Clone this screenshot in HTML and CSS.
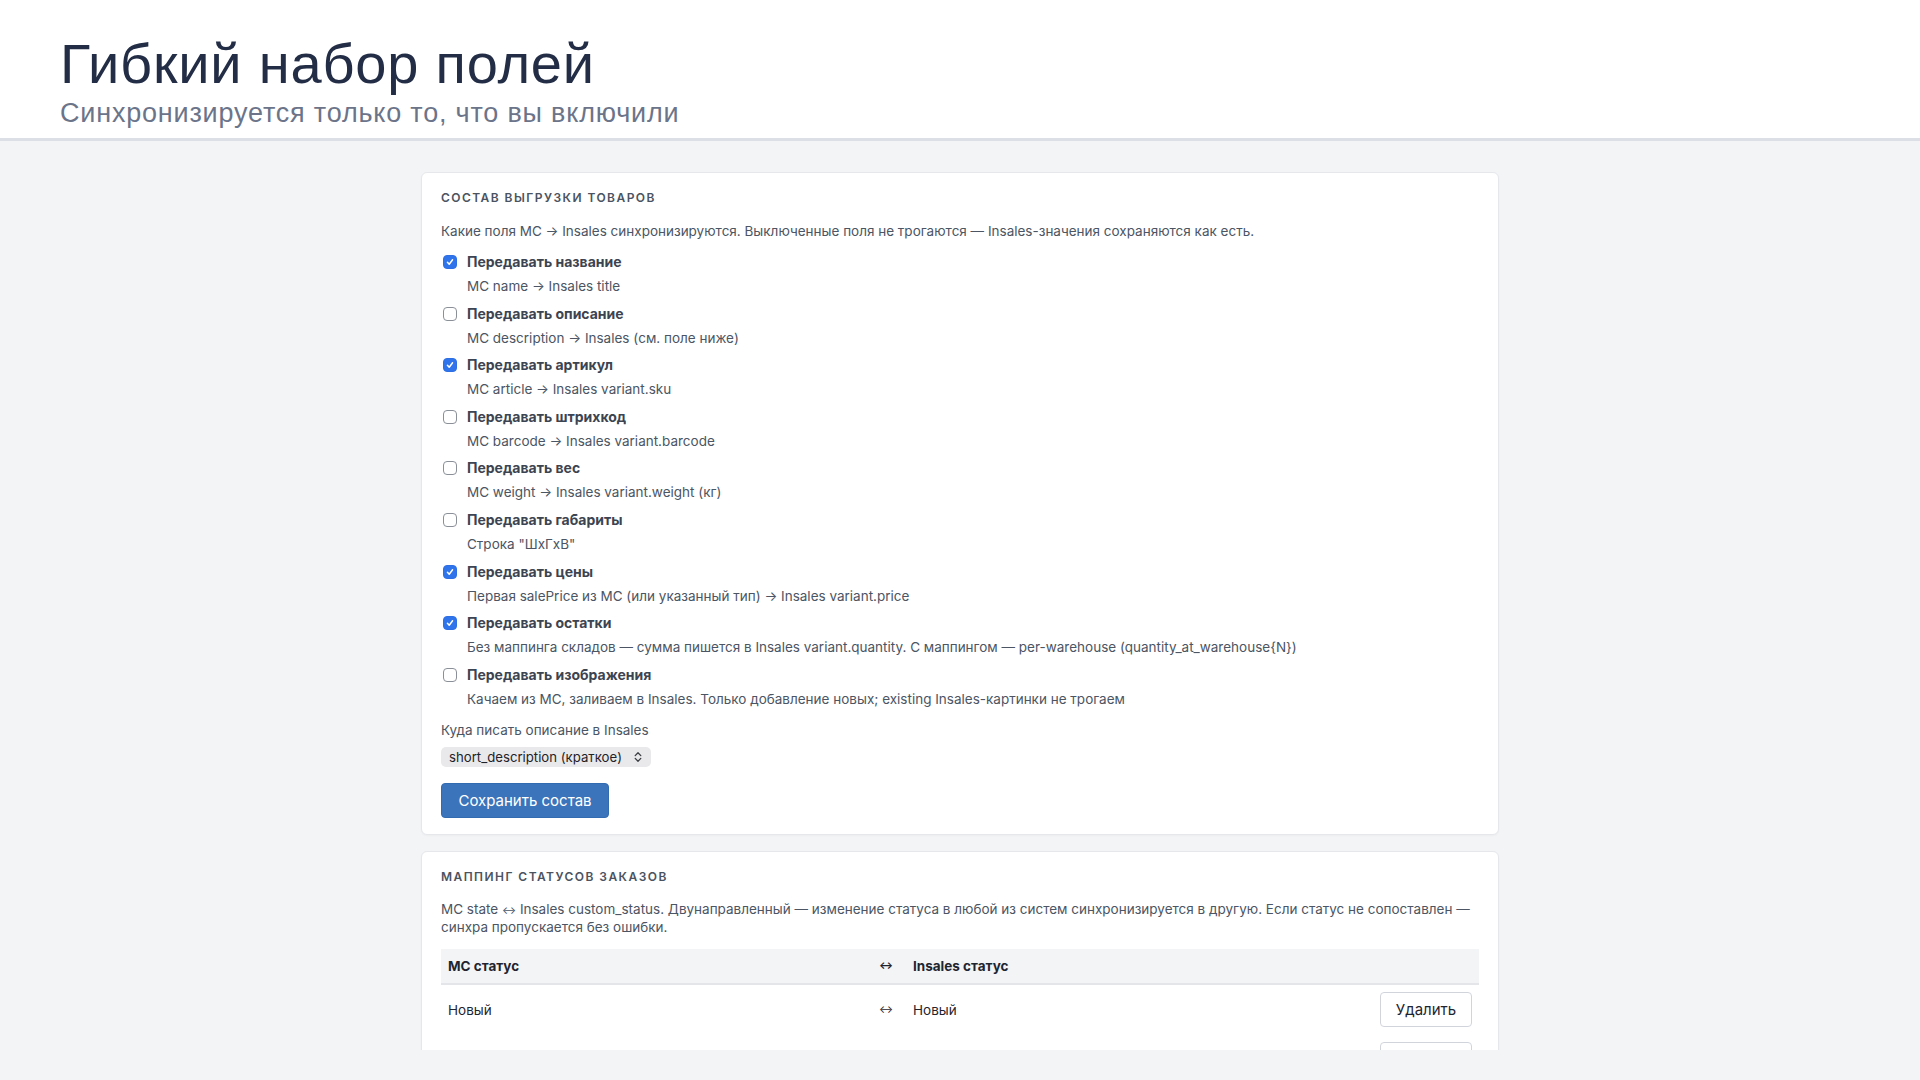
FILE: index.html
```html
<!DOCTYPE html>
<html lang="ru">
<head>
<meta charset="utf-8">
<title>Гибкий набор полей</title>
<link rel="stylesheet" href="styles.css">
</head>
<body>
<div class="page">
  <header class="hero">
    <h1 class="hero-title">Гибкий набор полей</h1>
    <p class="hero-sub">Синхронизируется только то, что вы включили</p>
  </header>
  <main class="main">
    <div class="container">
      <section class="card">
        <h2 class="card-title">Состав выгрузки товаров</h2>
        <p class="card-desc">Какие поля МС → Insales синхронизируются. Выключенные поля не трогаются — Insales-значения сохраняются как есть.</p>
        <ul class="fields">
          <li class="field">
            <div class="field-head"><span class="cb cb-on"><svg viewBox="0 0 14 14"><path d="M4 7.3 L6.1 9.6 L10 4.4" /></svg></span><span class="field-label">Передавать название</span></div>
            <div class="field-hint">MC name → Insales title</div>
          </li>
          <li class="field">
            <div class="field-head"><span class="cb"></span><span class="field-label">Передавать описание</span></div>
            <div class="field-hint">MC description → Insales (см. поле ниже)</div>
          </li>
          <li class="field">
            <div class="field-head"><span class="cb cb-on"><svg viewBox="0 0 14 14"><path d="M4 7.3 L6.1 9.6 L10 4.4" /></svg></span><span class="field-label">Передавать артикул</span></div>
            <div class="field-hint">MC article → Insales variant.sku</div>
          </li>
          <li class="field">
            <div class="field-head"><span class="cb"></span><span class="field-label">Передавать штрихкод</span></div>
            <div class="field-hint">MC barcode → Insales variant.barcode</div>
          </li>
          <li class="field">
            <div class="field-head"><span class="cb"></span><span class="field-label">Передавать вес</span></div>
            <div class="field-hint">MC weight → Insales variant.weight (кг)</div>
          </li>
          <li class="field">
            <div class="field-head"><span class="cb"></span><span class="field-label">Передавать габариты</span></div>
            <div class="field-hint">Строка "ШxГxВ"</div>
          </li>
          <li class="field">
            <div class="field-head"><span class="cb cb-on"><svg viewBox="0 0 14 14"><path d="M4 7.3 L6.1 9.6 L10 4.4" /></svg></span><span class="field-label">Передавать цены</span></div>
            <div class="field-hint">Первая salePrice из МС (или указанный тип) → Insales variant.price</div>
          </li>
          <li class="field">
            <div class="field-head"><span class="cb cb-on"><svg viewBox="0 0 14 14"><path d="M4 7.3 L6.1 9.6 L10 4.4" /></svg></span><span class="field-label">Передавать остатки</span></div>
            <div class="field-hint">Без маппинга складов — сумма пишется в Insales variant.quantity. С маппингом — per-warehouse (quantity_at_warehouse{N})</div>
          </li>
          <li class="field">
            <div class="field-head"><span class="cb"></span><span class="field-label">Передавать изображения</span></div>
            <div class="field-hint">Качаем из МС, заливаем в Insales. Только добавление новых; existing Insales-картинки не трогаем</div>
          </li>
        </ul>
        <div class="form-label">Куда писать описание в Insales</div>
        <div class="select">
          <span class="select-text">short_description (краткое)</span>
          <svg class="select-icon" viewBox="0 0 8 12"><path d="M1.2 4.6 L4 1.8 L6.8 4.6 M1.2 7.4 L4 10.2 L6.8 7.4" /></svg>
        </div>
        <button class="btn-primary" type="button">Сохранить состав</button>
      </section>

      <section class="card">
        <h2 class="card-title">Маппинг статусов заказов</h2>
        <p class="card-desc card-desc-wrap">МС state <span class="arrow">↔</span> Insales custom_status. Двунаправленный — изменение статуса в любой из систем синхронизируется в другую. Если статус не сопоставлен — синхра пропускается без ошибки.</p>
        <div class="map-table">
          <div class="map-row map-head">
            <div class="cell">МС статус</div>
            <div class="cell cell-arrow">↔</div>
            <div class="cell">Insales статус</div>
            <div class="cell"></div>
          </div>
          <div class="map-row">
            <div class="cell">Новый</div>
            <div class="cell cell-arrow">↔</div>
            <div class="cell">Новый</div>
            <div class="cell cell-act"><button class="btn-light" type="button">Удалить</button></div>
          </div>
          <div class="map-row">
            <div class="cell">Подтвержден</div>
            <div class="cell cell-arrow">↔</div>
            <div class="cell">Подтвержден</div>
            <div class="cell cell-act"><button class="btn-light" type="button">Удалить</button></div>
          </div>
        </div>
      </section>
    </div>
  </main>
</div>
</body>
</html>
```

FILE: styles.css
```css
* { box-sizing: border-box; }
html, body { margin: 0; padding: 0; }
body {
  background: #f3f4f6;
  font-family: Inter, "Noto Sans", "DejaVu Sans", sans-serif;
  color: #374151;
}
.page {
  height: 1080px;
  display: flex;
  flex-direction: column;
  overflow: hidden;
  padding-bottom: 30px;
}
.hero {
  flex: none;
  background: #ffffff;
  height: 141px;
  padding: 32px 0 0 60px;
  border-bottom: 3px solid #dcdfe5;
}
.hero-title {
  margin: 0;
  font-family: "Liberation Sans", Arial, sans-serif;
  font-weight: 400;
  font-size: 56px;
  line-height: 64px;
  letter-spacing: 0.8px;
  color: #232e46;
}
.hero-sub {
  margin: 2px 0 0;
  font-family: "Liberation Sans", Arial, sans-serif;
  font-size: 27px;
  line-height: 30px;
  letter-spacing: 0.8px;
  color: #6b7489;
}
.main {
  flex: 1;
  overflow: hidden;
  padding-top: 31px;
}
.container {
  width: 1078px;
  margin: 0 auto;
  display: flex;
  flex-direction: column;
  gap: 16px;
}
.card {
  background: #ffffff;
  border: 1px solid #e5e7eb;
  border-radius: 6px;
  padding: 17px 19px 16px;
  box-shadow: 0 1px 2px rgba(0,0,0,0.03);
}
.card-title {
  margin: 0;
  font-size: 12px;
  line-height: 16px;
  font-weight: 600;
  text-transform: uppercase;
  letter-spacing: 1.45px;
  color: #4b5360;
}
.card-desc {
  margin: 16px 0 0;
  font-size: 13.5px;
  line-height: 18px;
  color: #4b5563;
}
.card-desc-wrap {
  margin-top: 15px;
  line-height: 18.5px;
}
.arrow {
  font-size: 10.5px;
  line-height: 1;
}
.fields {
  list-style: none;
  margin: 12px 0 0;
  padding: 0;
  display: flex;
  flex-direction: column;
  gap: 7.6px;
}
.field {
  display: flex;
  flex-direction: column;
  gap: 4px;
}
.field-head {
  display: flex;
  align-items: center;
  gap: 10px;
  height: 20px;
  padding-left: 2px;
}
.cb {
  flex: none;
  width: 14px;
  height: 14px;
  border-radius: 4px;
  border: 1px solid #8a8f98;
  background: #ffffff;
  display: flex;
  align-items: center;
  justify-content: center;
}
.cb-on {
  border-color: #2f6fe4;
  background: #2f74ea;
}
.cb svg { width: 14px; height: 14px; }
.cb svg path {
  fill: none;
  stroke: #ffffff;
  stroke-width: 1.7;
  stroke-linecap: round;
  stroke-linejoin: round;
}
.field-label {
  font-size: 14px;
  line-height: 20px;
  font-weight: 700;
  color: #3d4451;
}
.field-hint {
  padding-left: 26px;
  font-size: 13.5px;
  line-height: 20px;
  color: #4b5563;
}
.form-label {
  margin-top: 11px;
  font-size: 13.5px;
  line-height: 20px;
  color: #4b5563;
}
.select {
  margin-top: 7px;
  width: 210px;
  height: 20px;
  border-radius: 5px;
  background: #e9e9eb;
  display: flex;
  align-items: center;
  justify-content: space-between;
  padding: 0 9px 0 8px;
}
.select-text {
  font-size: 13.2px;
  color: #1f2328;
}
.select-icon { width: 8px; height: 12px; }
.select-icon path {
  fill: none;
  stroke: #3a3d42;
  stroke-width: 1.3;
  stroke-linecap: round;
  stroke-linejoin: round;
}
.btn-primary {
  display: block;
  margin-top: 16px;
  width: 168px;
  height: 35px;
  border: 1px solid #336bb0;
  border-radius: 4px;
  background: #3b74ba;
  color: #ffffff;
  font-family: inherit;
  font-size: 15px;
  padding: 0;
}
.map-table {
  margin-top: 12px;
  display: flex;
  flex-direction: column;
}
.map-row {
  display: grid;
  grid-template-columns: 436px 29px 1fr auto;
  align-items: center;
  height: 50px;
}
.map-head {
  height: 36px;
  background: #f3f4f6;
  border-bottom: 2px solid #e3e5e9;
  font-weight: 700;
  color: #1f2530;
}
.cell {
  padding: 0 7px;
  font-size: 13.5px;
  color: #1f2530;
}
.cell-arrow { padding: 0 0 0 2px; font-size: 10.5px; }
.cell-act { padding: 0 7px 0 0; }
.btn-light {
  width: 92px;
  height: 35px;
  background: #ffffff;
  border: 1px solid #d1d5db;
  border-radius: 4px;
  font-family: inherit;
  font-size: 15px;
  color: #1f2530;
  padding: 0;
}
```
